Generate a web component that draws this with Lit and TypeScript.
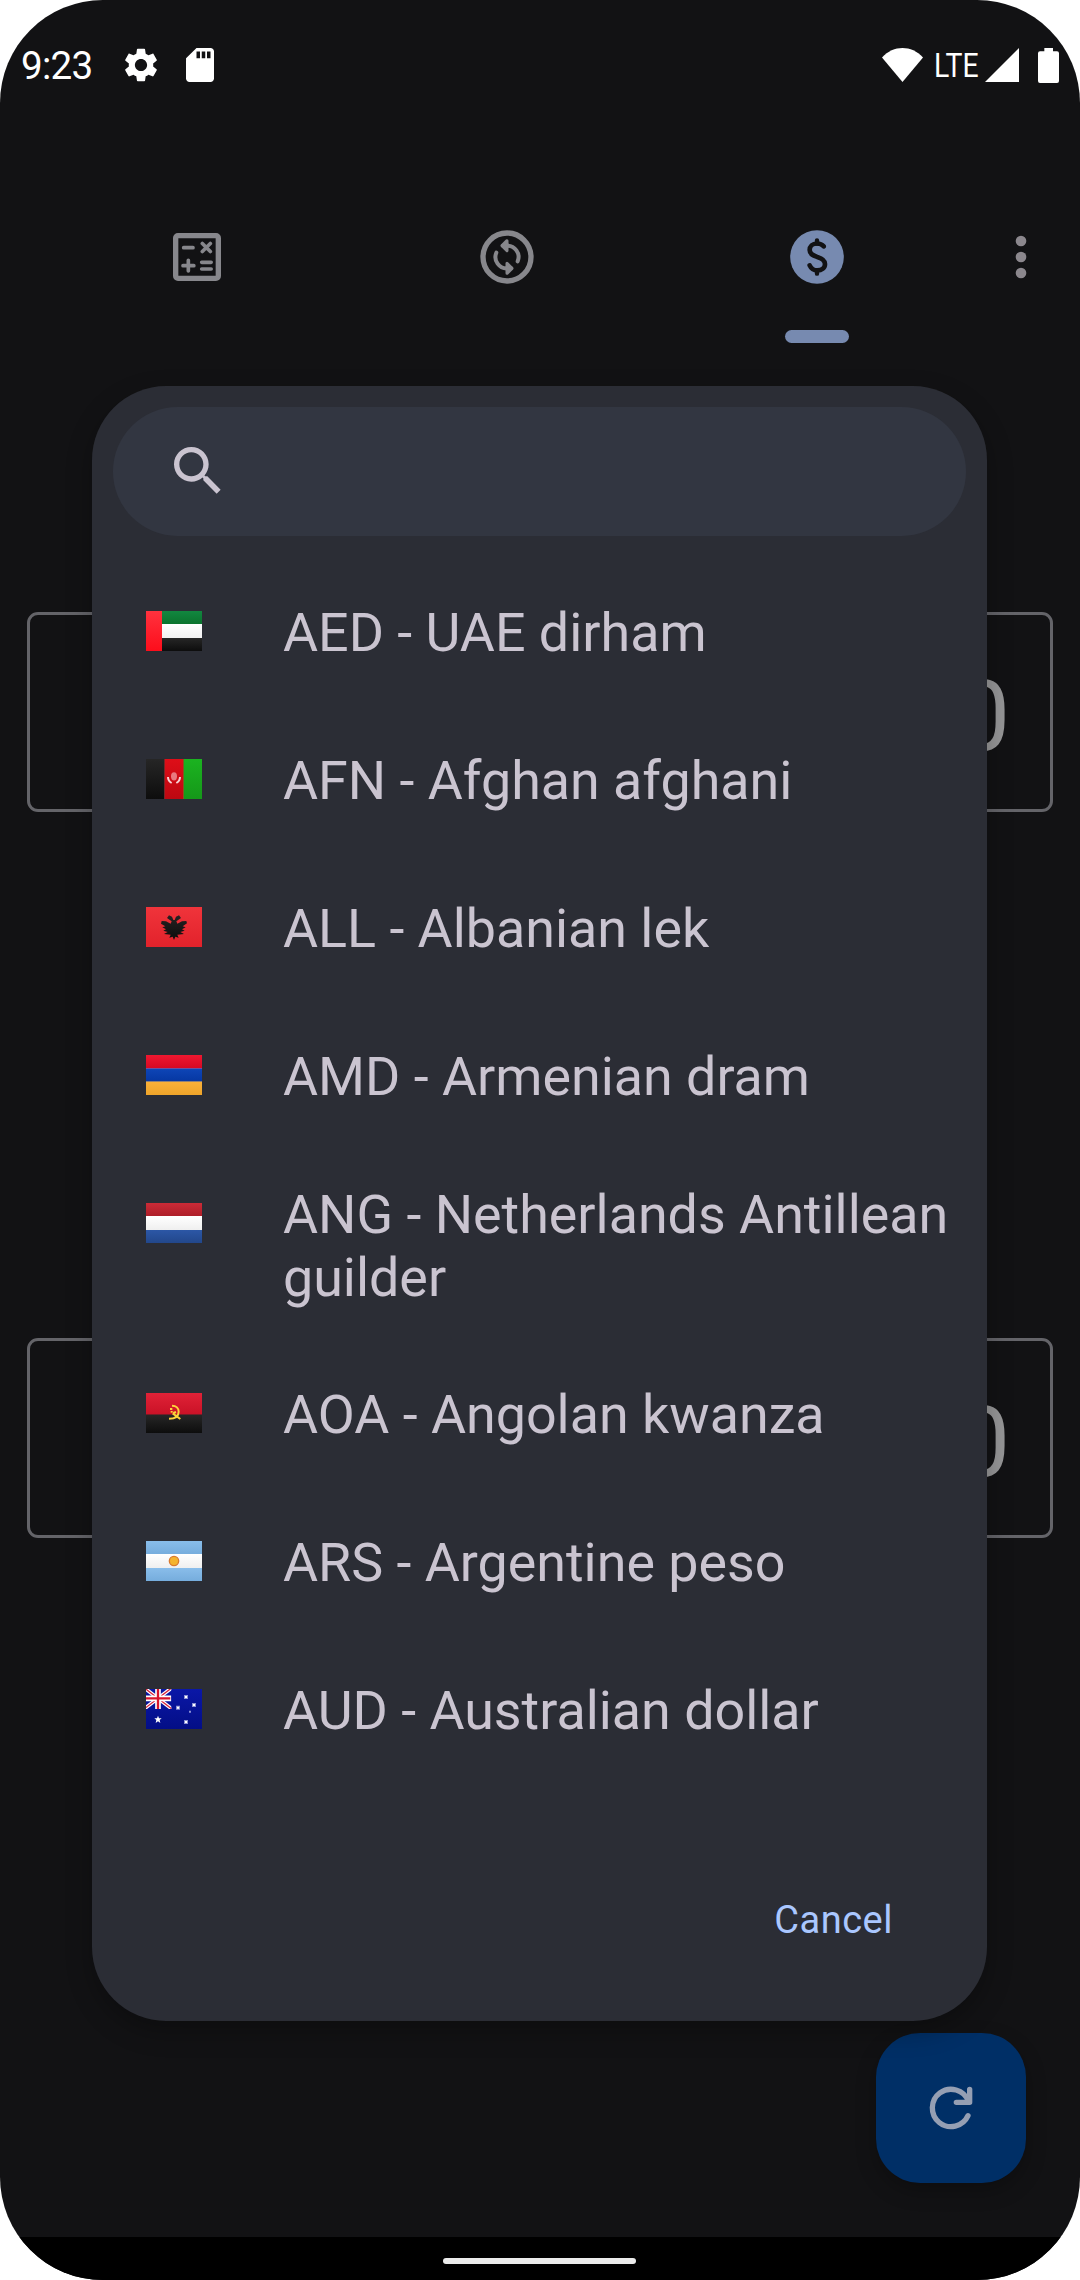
import { LitElement, html, css, svg } from "lit";
import { customElement, property } from "lit/decorators.js";

const gradient = (id: string, from: string, to: string) => svg`
  <linearGradient id=${id} x1="0" y1="0" x2="0" y2="1">
    <stop offset="0" stop-color=${from} /><stop offset="1" stop-color=${to} />
  </linearGradient>`;

const flags: Record<string, unknown> = {
  ae: svg`
    <defs>${gradient("r", "#ff323e", "#fd0d1b")}${gradient("g", "#128740", "#0b732d")}${gradient("w", "#ffffff", "#f0f0f0")}${gradient("k", "#262626", "#0d0d0d")}</defs>
    <rect x="48" width="120" height="39" fill="url(#g)" />
    <rect x="48" y="39" width="120" height="42" fill="url(#w)" />
    <rect x="48" y="81" width="120" height="39" fill="url(#k)" />
    <rect width="48" height="120" fill="url(#r)" />`,
  af: svg`
    <defs>${gradient("k", "#262626", "#0d0d0d")}${gradient("r", "#de0e18", "#bd0811")}${gradient("g", "#1bb320", "#159819")}</defs>
    <rect width="54" height="120" fill="url(#k)" />
    <rect x="57" width="54" height="120" fill="url(#r)" />
    <rect x="114" width="54" height="120" fill="url(#g)" />
    <rect x="54" width="3" height="120" fill="#782528" />
    <rect x="111" width="3" height="120" fill="#805a1d" />
    <ellipse cx="84" cy="52" rx="9" ry="12.5" fill="#e8797f" />
    <path d="M66 54C66 63 70 68 77 72M102 54C102 63 98 68 91 72" fill="none" stroke="#f8d2d4" stroke-width="6" />`,
  al: svg`
    <defs>${gradient("r", "#f0343b", "#e2222b")}${gradient("k", "#262222", "#0e0c0c")}</defs>
    <rect width="168" height="120" fill="url(#r)" />
    <path fill="url(#k)" d="M84 99L80 89L70 92L74 83L54 81L65 75L52 71L60 67L49 61L58 58L45 50L47 42L60 43L74 50L77 43L63 33L69 25L78 29L82 39H86L90 29L99 25L105 33L91 43L94 50L108 43L121 42L123 49L110 58L119 61L108 67L116 71L103 75L114 81L94 83L98 92L88 89Z" />`,
  am: svg`
    <defs>${gradient("r", "#ef1730", "#d70923")}${gradient("b", "#0e46b8", "#0637a2")}${gradient("y", "#f9b039", "#eea42a")}</defs>
    <rect width="168" height="39" fill="url(#r)" />
    <rect y="39" width="168" height="40" fill="url(#b)" />
    <rect y="81" width="168" height="39" fill="url(#y)" />
    <rect y="39" width="168" height="3" fill="#6d51a1" />
    <rect y="78" width="168" height="3" fill="#8f8179" />`,
  nl: svg`
    <defs>${gradient("r", "#cb2b37", "#ae1e29")}${gradient("w", "#ffffff", "#efefef")}${gradient("b", "#2c57a6", "#22478b")}</defs>
    <rect width="168" height="39" fill="url(#r)" />
    <rect y="39" width="168" height="42" fill="url(#w)" />
    <rect y="81" width="168" height="39" fill="url(#b)" />`,
  ao: svg`
    <defs>${gradient("r", "#e02237", "#ca1227")}${gradient("k", "#262626", "#0d0d0d")}</defs>
    <rect width="168" height="63" fill="url(#r)" />
    <rect y="66" width="168" height="54" fill="url(#k)" />
    <rect y="63" width="168" height="3" fill="#761c26" />
    <path d="M78 38C91 38 98 46 98 56C98 69 89 77 69 77M80 61L103 78M82 60L90 57" fill="none" stroke="#fcd43a" stroke-width="6" />
    <rect x="72" y="45" width="7" height="6" fill="#fcd43a" />
    <rect x="74" y="54" width="6" height="5" fill="#fcd43a" />`,
  ar: svg`
    <defs>${gradient("b", "#89bdea", "#76addd")}${gradient("w", "#ffffff", "#efefef")}</defs>
    <rect width="168" height="39" fill="url(#b)" />
    <rect y="39" width="168" height="42" fill="url(#w)" />
    <rect y="81" width="168" height="39" fill="url(#b)" />
    <circle cx="84" cy="60" r="14" fill="#f4b32e" stroke="#d97a2f" stroke-width="4" />`,
  au: svg`
    <defs>${gradient("b", "#0a17a7", "#030e86")}</defs>
    <rect width="168" height="120" fill="url(#b)" />
    <svg width="76" height="60">
      <path d="M-6 -4L78 60M78 -4L-6 60" stroke="#fff" stroke-width="11" />
      <path d="M-6 -4L78 60M78 -4L-6 60" stroke="#d8263c" stroke-width="4" />
      <path d="M36 0V60M0 28H76" stroke="#fff" stroke-width="17" />
      <path d="M36 0V60M0 28H73" stroke="#d8152c" stroke-width="7" />
    </svg>
    <path d="M36 80L39 88H47L41 93L43 102L36 97L29 102L31 93L25 88H33Z" fill="#fff" />
    <path d="M114 18h12v12h-12zM90 50h12v12h-12zM138 42h12v12h-12zM114 93h12v12h-12zM129 65h6v6h-6z" fill="#8a90d4" />
    <path d="M117 21h6v6h-6zM93 53h6v6h-6zM141 45h6v6h-6zM117 96h6v6h-6z" fill="#fff" />`,
};

@customElement("country-flag")
class CountryFlag extends LitElement {
  @property() code = "";
  static styles = css`
    :host { display: block; width: 56px; height: 40px; flex: none; }
    .flag { display: block; width: 56px; height: 40px; }
  `;
  render() {
    return html`<svg class="flag" viewBox="0 0 168 120">${flags[this.code]}</svg>`;
  }
}

@customElement("status-bar")
class StatusBar extends LitElement {
  static styles = css`
    :host { display: block; height: 130px; }
    .bar { display: flex; align-items: flex-start; height: 130px; color: #fff; box-sizing: border-box; padding: 48px 21px 0 21px; }
    .time { font-size: 38.6px; line-height: 35px; letter-spacing: -0.7px; width: 71px; white-space: nowrap; }
    .gear { width: 34px; height: 34px; margin-left: 32px; }
    .sd { width: 28px; height: 34px; margin-left: 28px; }
    .grow { flex: 1; }
    .wifi { width: 41px; height: 34px; }
    .lte { width: 43px; margin-left: 11px; font-size: 33px; line-height: 35px; white-space: nowrap; }
    .squeeze { display: inline-block; transform: scaleX(0.86); transform-origin: 0 50%; }
    .signal { width: 34px; height: 34px; margin-left: 8px; }
    .battery { width: 21px; height: 35px; margin-left: 19px; }
    svg { display: block; flex: none; fill: currentColor; }
  `;
  render() {
    return html`<div class="bar">
      <div class="time">9:23</div>
      <svg class="gear" viewBox="2 2 20 20"><path d="M19.14 12.94c.04-.3.06-.61.06-.94 0-.32-.02-.64-.07-.94l2.03-1.58c.18-.14.23-.41.12-.61l-1.92-3.32c-.12-.22-.37-.29-.59-.22l-2.39.96c-.5-.38-1.03-.7-1.62-.94l-.36-2.54c-.04-.24-.24-.41-.48-.41h-3.84c-.24 0-.43.17-.47.41l-.36 2.54c-.59.24-1.13.57-1.62.94l-2.39-.96c-.22-.08-.47 0-.59.22L2.74 8.87c-.12.21-.08.47.12.61l2.03 1.58c-.05.3-.09.63-.09.94s.02.64.07.94l-2.03 1.58c-.18.14-.23.41-.12.61l1.92 3.32c.12.22.37.29.59.22l2.39-.96c.5.38 1.03.7 1.62.94l.36 2.54c.05.24.24.41.48.41h3.84c.24 0 .44-.17.47-.41l.36-2.54c.59-.24 1.13-.56 1.62-.94l2.39.96c.22.08.47 0 .59-.22l1.92-3.32c.12-.22.07-.47-.12-.61l-2.01-1.58zM12 15.6c-1.98 0-3.6-1.62-3.6-3.6s1.62-3.6 3.6-3.6 3.6 1.62 3.6 3.6-1.62 3.6-3.6 3.6z"/></svg>
      <svg class="sd" viewBox="4 2 16 20" preserveAspectRatio="none"><path d="M18 2h-8L4.02 8 4 20c0 1.1.9 2 2 2h12c1.1 0 2-.9 2-2V4c0-1.1-.9-2-2-2zm-6 6h-2V4h2v4zm3 0h-2V4h2v4zm3 0h-2V4h2v4z"/></svg>
      <div class="grow"></div>
      <svg class="wifi" viewBox="0 0 120 100" preserveAspectRatio="none"><path d="M0 28C34 -9 86 -9 120 28L60 100Z"/></svg>
      <div class="lte"><span class="squeeze">LTE</span></div>
      <svg class="signal" viewBox="0 0 100 100"><path d="M100 0V100H0Z"/></svg>
      <svg class="battery" viewBox="0 0 63 105"><path d="M19 0H45V10H57Q63 10 63 16V99Q63 105 57 105H6Q0 105 0 99V16Q0 10 6 10H19Z"/></svg>
    </div>`;
  }
}

@customElement("tab-strip")
class TabStrip extends LitElement {
  static styles = css`
    :host { display: block; height: 214px; }
    .strip { display: flex; padding: 0 10px 0 42px; color: #87878c; }
    .tab { width: 310px; height: 213px; display: flex; flex-direction: column; align-items: center; padding-top: 95px; box-sizing: border-box; }
    .icon { width: 64px; height: 64px; display: block; }
    .active { color: #778ab0; }
    .mark { width: 64px; height: 13px; margin-top: 41px; border-radius: 7px; background: #778ab0; }
    .menu { width: 98px; color: #8b878d; padding-top: 95px; display: flex; justify-content: center; }
  `;
  render() {
    return html`<div class="strip">
      <div class="tab"><svg class="icon" viewBox="0 0 192 192" fill="none" stroke="currentColor" stroke-width="11" stroke-linecap="round">
        <rect x="32" y="32" width="128" height="128" rx="7" stroke-width="16"/>
        <path d="M56 68H84M112 55.500L136 79.500M136 55.500L112 79.500M54 122H86.500M70 106V138M110 112H138.500M110 132H138.500"/></svg></div>
      <div class="tab"><svg class="icon" viewBox="0 0 192 192" fill="none" stroke="currentColor" stroke-width="12" stroke-linecap="round">
        <circle cx="96" cy="96" r="72" stroke-width="16"/>
        <path d="M84 62H94A34 34 0 0 1 128 109M108 130H98A34 34 0 0 1 64 83"/>
        <path d="M96 47L81 62L96 77ZM96 145L111 130L96 115Z" fill="currentColor" stroke-width="9" stroke-linejoin="round"/></svg></div>
      <div class="tab active"><svg class="icon" viewBox="0 0 192 192">
        <circle cx="96" cy="96" r="80.500" fill="currentColor"/>
        <path d="M116 64C111 58 104 55.500 96 55.500C82 55.500 74 64 74 75C74 88 86 92 97 96C110 100 120 105 120 117C120 129 110 136 97 136C86 136 78 130 74 121" fill="none" stroke="#121214" stroke-width="14" stroke-linecap="round"/>
        <path d="M96 46V56M96 136V146" stroke="#121214" stroke-width="13" stroke-linecap="round"/></svg>
        <div class="mark"></div></div>
      <div class="menu"><svg class="icon" viewBox="0 0 192 192" fill="currentColor"><circle cx="96" cy="48" r="16"/><circle cx="96" cy="96" r="16"/><circle cx="96" cy="144" r="16"/></svg></div>
    </div>`;
  }
}

const currencies = [
  ["ae", "AED - UAE dirham"],
  ["af", "AFN - Afghan afghani"],
  ["al", "ALL - Albanian lek"],
  ["am", "AMD - Armenian dram"],
  ["nl", "ANG - Netherlands Antillean guilder"],
  ["ao", "AOA - Angolan kwanza"],
  ["ar", "ARS - Argentine peso"],
  ["au", "AUD - Australian dollar"],
];

@customElement("currency-dialog")
class CurrencyDialog extends LitElement {
  static styles = css`
    :host { display: block; }
    .dialog { width: 895px; height: 1635px; box-sizing: border-box; border-radius: 74px; background: #2b2d35; padding-top: 21px;
      display: flex; flex-direction: column; box-shadow: 0 10px 26px rgba(0, 0, 0, 0.28); }
    .search { margin: 0 21px 23px; height: 129px; border-radius: 65px; background: #323641; display: flex; align-items: flex-start; padding: 32px 0 0 53px; box-sizing: border-box; }
    .glass { width: 64px; height: 64px; fill: #cac4d0; }
    .row { display: flex; align-items: center; min-height: 148px; padding: 31.5px 20px 31.5px 54px; box-sizing: border-box; }
    .row country-flag { align-self: flex-start; margin-top: 20.5px; }
    .name { flex: 1; margin-left: 81px; font-size: 53.8px; line-height: 63.5px; color: #cac4d0; }
    .actions { margin-top: auto; display: flex; justify-content: flex-end; padding: 0 94px 73px 0; }
    .cancel { font: inherit; border: 0; padding: 0; background: none; color: #aac7ff; font-size: 38px; line-height: 56px; letter-spacing: 0.5px; white-space: nowrap; }
  `;
  render() {
    return html`<div class="dialog">
      <div class="search"><svg class="glass" viewBox="0 0 24 24"><path d="M15.5 14h-.79l-.28-.27C15.410 12.590 16 11.110 16 9.500 16 5.910 13.090 3 9.500 3S3 5.910 3 9.500 5.910 16 9.500 16c1.610 0 3.090-.590 4.230-1.570l.270.280v.790l5 4.990L20.490 19l-4.990-5zm-6 0C7.010 14 5 11.990 5 9.500S7.010 5 9.500 5 14 7.010 14 9.500 11.990 14 9.500 14z"/></svg></div>
      ${currencies.map(([code, name]) => html`<div class="row"><country-flag code=${code}></country-flag><div class="name">${name}</div></div>`)}
      <div class="actions"><button class="cancel">Cancel</button></div>
    </div>`;
  }
}

@customElement("app-root")
class AppRoot extends LitElement {
  static styles = css`
    :host { display: block; width: 1080px; height: 2280px; background: #fff; font-family: Roboto, "Liberation Sans", sans-serif; }
    .phone { position: relative; width: 1080px; height: 2280px; border-radius: 103px; overflow: hidden; background: #121214; display: flex; flex-direction: column; }
    .amounts { display: flex; flex-direction: column; gap: 526px; padding: 268px 27px 0; }
    .amount { height: 200px; box-sizing: border-box; border: 3px solid #646469; border-radius: 11px; display: flex; align-items: center; justify-content: flex-end; padding: 9px 40px 0 0; font-size: 98px; line-height: 112px; color: #969697; }
    .nav { margin-top: auto; height: 43px; background: #000; display: flex; justify-content: center; align-items: center; }
    .handle { width: 193px; height: 6px; border-radius: 3px; background: #ebebeb; margin: 5px 2px 0 0; }
    .fab { position: absolute; left: 876px; top: 2033px; width: 150px; height: 150px; border-radius: 44px; background: #002f66; display: flex; align-items: center; justify-content: center; box-shadow: 0 8px 20px rgba(0, 0, 0, 0.25); }
    .refresh { width: 64px; height: 64px; }
    .popup { position: absolute; left: 92px; top: 386px; }
  `;
  render() {
    return html`<div class="phone">
      <status-bar></status-bar>
      <tab-strip></tab-strip>
      <div class="amounts"><div class="amount">0</div><div class="amount">0</div></div>
      <div class="fab"><svg class="refresh" viewBox="0 0 192 192" fill="none" stroke="#959fb3" stroke-width="16" stroke-linecap="round" stroke-linejoin="round">
        <path d="M147 119A56 56 0 1 1 148 75M152 40V79H112"/></svg></div>
      <div class="nav"><div class="handle"></div></div>
      <currency-dialog class="popup"></currency-dialog>
    </div>`;
  }
}
